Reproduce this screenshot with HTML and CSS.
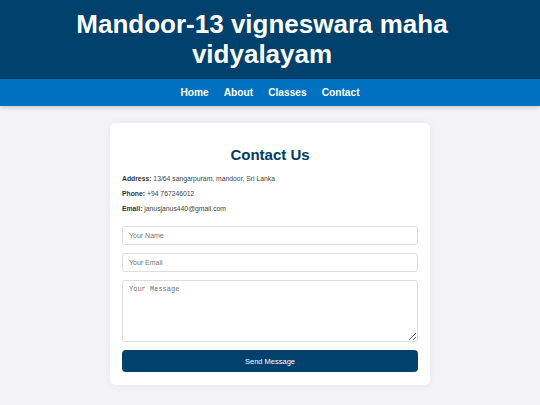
FILE: index.html
```html
<!DOCTYPE html>
<html lang="en">
<head>
    <meta charset="UTF-8">
    <meta name="viewport" content="width=device-width, initial-scale=1.0">
    <title>Mandoor-13 vigneswara maha vidyalayam - Contact</title>
    <link rel="stylesheet" href="styles.css">
</head>
<body>
    <header class="site-header">
        <h1>Mandoor-13 vigneswara maha vidyalayam</h1>
    </header>
    <nav class="site-nav">
        <a href="#">Home</a>
        <a href="#">About</a>
        <a href="#">Classes</a>
        <a href="#">Contact</a>
    </nav>
    <main class="page">
        <section class="contact-card">
            <h2>Contact Us</h2>
            <p><strong>Address:</strong> 13/64 sangarpuram, mandoor, Sri Lanka</p>
            <p><strong>Phone:</strong> +94 767246012</p>
            <p><strong>Email:</strong> janusjanus440@gmail.com</p>
            <form class="contact-form">
                <input type="text" placeholder="Your Name">
                <input type="email" placeholder="Your Email">
                <textarea placeholder="Your Message"></textarea>
                <button type="submit">Send Message</button>
            </form>
        </section>
    </main>
</body>
</html>
```

FILE: styles.css
```css
body {
    margin: 0;
    font-family: "Liberation Sans", Arial, sans-serif;
    background-color: #f3f3f8;
}
.site-header {
    background-color: #00416d;
    color: #fff;
    text-align: center;
    padding: 9px 36px 10px 20px;
}
.site-header h1 {
    margin: 0;
    font-size: 26px;
    line-height: 30px;
}
.site-nav {
    background-color: #0070c0;
    display: flex;
    justify-content: center;
    gap: 15px;
    padding: 7px 0;
    box-shadow: 0 2px 4px rgba(0, 0, 0, 0.15);
}
.site-nav a {
    color: #fff;
    text-decoration: none;
    font-weight: bold;
    font-size: 10.2px;
    line-height: 13px;
}
.page {
    padding: 17px 0 20px;
}
.contact-card {
    width: 296px;
    margin: 0 auto;
    background-color: #fff;
    padding: 12px 12px 13px;
    border-radius: 5px;
    box-shadow: 0 0 8px rgba(0, 0, 0, 0.06);
}
.contact-card h2 {
    margin: 11px 0 11px;
    text-align: center;
    color: #003a66;
    font-size: 15px;
}
.contact-card p {
    margin: 0 0 6px;
    font-size: 6.8px;
    line-height: 9px;
    color: #444;
}
.contact-card p strong {
    color: #333;
}
.contact-form {
    display: flex;
    flex-direction: column;
    gap: 8px;
    margin-top: 13px;
}
.contact-form input, .contact-form textarea {
    box-sizing: border-box;
    width: 100%;
    border: 1px solid #ddd;
    border-radius: 3px;
    padding: 4px 6px;
    font-size: 7px;
    font-family: "Liberation Sans", Arial, sans-serif;
}
.contact-form input {
    height: 19px;
}
.contact-form textarea {
    height: 62px;
    font-family: "Liberation Mono", monospace;
    resize: vertical;
}
.contact-form button {
    height: 22px;
    border: none;
    border-radius: 4px;
    background-color: #00416d;
    color: #fff;
    font-size: 7.5px;
    font-family: "Liberation Sans", Arial, sans-serif;
    cursor: pointer;
}
```
